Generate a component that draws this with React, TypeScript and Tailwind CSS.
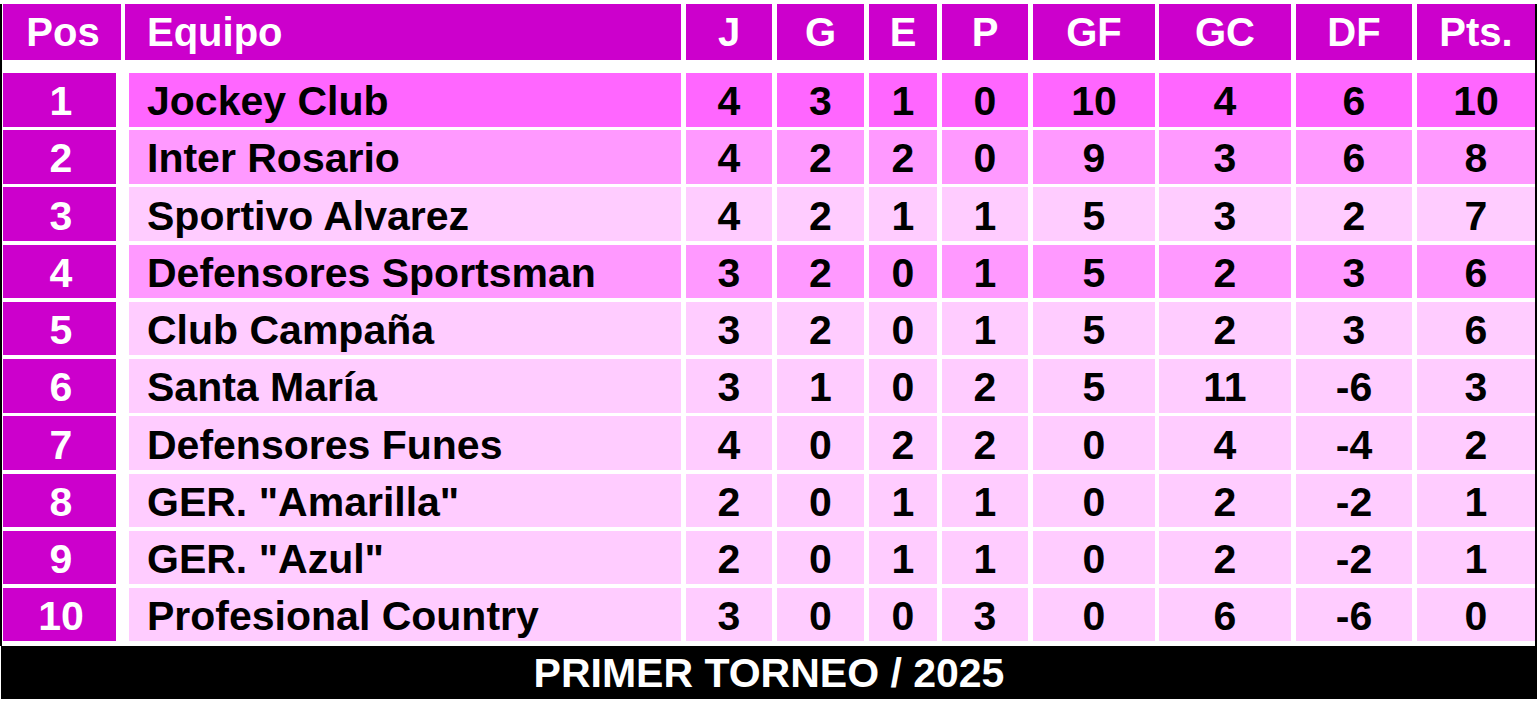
const teams = [
  { pos: 1, name: 'Jockey Club', j: 4, g: 3, e: 1, p: 0, gf: 10, gc: 4, df: 6, pts: 10 },
  { pos: 2, name: 'Inter Rosario', j: 4, g: 2, e: 2, p: 0, gf: 9, gc: 3, df: 6, pts: 8 },
  { pos: 3, name: 'Sportivo Alvarez', j: 4, g: 2, e: 1, p: 1, gf: 5, gc: 3, df: 2, pts: 7 },
  { pos: 4, name: 'Defensores Sportsman', j: 3, g: 2, e: 0, p: 1, gf: 5, gc: 2, df: 3, pts: 6 },
  { pos: 5, name: 'Club Campaña', j: 3, g: 2, e: 0, p: 1, gf: 5, gc: 2, df: 3, pts: 6 },
  { pos: 6, name: 'Santa María', j: 3, g: 1, e: 0, p: 2, gf: 5, gc: 11, df: -6, pts: 3 },
  { pos: 7, name: 'Defensores Funes', j: 4, g: 0, e: 2, p: 2, gf: 0, gc: 4, df: -4, pts: 2 },
  { pos: 8, name: 'GER. "Amarilla"', j: 2, g: 0, e: 1, p: 1, gf: 0, gc: 2, df: -2, pts: 1 },
  { pos: 9, name: 'GER. "Azul"', j: 2, g: 0, e: 1, p: 1, gf: 0, gc: 2, df: -2, pts: 1 },
  { pos: 10, name: 'Profesional Country', j: 3, g: 0, e: 0, p: 3, gf: 0, gc: 6, df: -6, pts: 0 },
];

// stat columns: widths + the white gap before each one
const statCols = [
  { key: 'j', label: 'J', cls: 'w-[86px] ml-[5px]' },
  { key: 'g', label: 'G', cls: 'w-[87px] ml-[5px]' },
  { key: 'e', label: 'E', cls: 'w-[68px] ml-[5px]' },
  { key: 'p', label: 'P', cls: 'w-[86px] ml-[5px]' },
  { key: 'gf', label: 'GF', cls: 'w-[122px] ml-[5px]' },
  { key: 'gc', label: 'GC', cls: 'w-[132px] ml-[4px]' },
  { key: 'df', label: 'DF', cls: 'w-[116px] ml-[5px]' },
  { key: 'pts', label: 'Pts.', cls: 'w-[118px] ml-[5px]' },
] as const;

function rowBg(pos: number) {
  if (pos === 1) return 'bg-[#ff66ff]';
  if (pos === 2 || pos === 4) return 'bg-[#ff99ff]';
  return 'bg-[#ffccff]';
}

function HeaderRow() {
  return (
    <div className="flex h-[56px] text-white text-[40px]">
      <div className="w-[118px] bg-[#cc00cc] flex items-center justify-center pl-[2px]">Pos</div>
      <div className="w-[556px] ml-[4px] bg-[#cc00cc] flex items-center pl-[22px]">Equipo</div>
      {statCols.map((c) => (
        <div key={c.key} className={`${c.cls} bg-[#cc00cc] flex items-center justify-center`}>
          {c.label}
        </div>
      ))}
    </div>
  );
}

function TeamRow({ t }: { t: (typeof teams)[number] }) {
  const bg = rowBg(t.pos);
  return (
    <div className="flex h-[53.5px] text-[41px]">
      <div className="w-[113px] bg-[#cc00cc] text-white flex items-center justify-center pt-[4px] pl-[3px]">
        {t.pos}
      </div>
      <div className={`w-[552px] ml-[13px] ${bg} text-black flex items-center pl-[18px] pt-[4px]`}>
        {t.name}
      </div>
      {statCols.map((c) => (
        <div key={c.key} className={`${c.cls} ${bg} text-black flex items-center justify-center pt-[4px]`}>
          {t[c.key]}
        </div>
      ))}
    </div>
  );
}

export default function App() {
  return (
    <div
      className="w-[1537px] h-[704px] bg-white pt-[4px] font-bold leading-none"
      style={{ fontFamily: '"Liberation Sans", Arial, sans-serif' }}
    >
      <div className="border-l-2 border-r-2 border-black pl-[1px] h-[642px]">
        <HeaderRow />
        <div className="flex flex-col gap-[3.72px] mt-[13px]">
          {teams.map((t) => (
            <TeamRow key={t.pos} t={t} />
          ))}
        </div>
      </div>
      <div className="ml-[1px] h-[53px] bg-black text-white text-[41px] flex items-center justify-center pt-[2px]">
        PRIMER TORNEO / 2025
      </div>
    </div>
  );
}
